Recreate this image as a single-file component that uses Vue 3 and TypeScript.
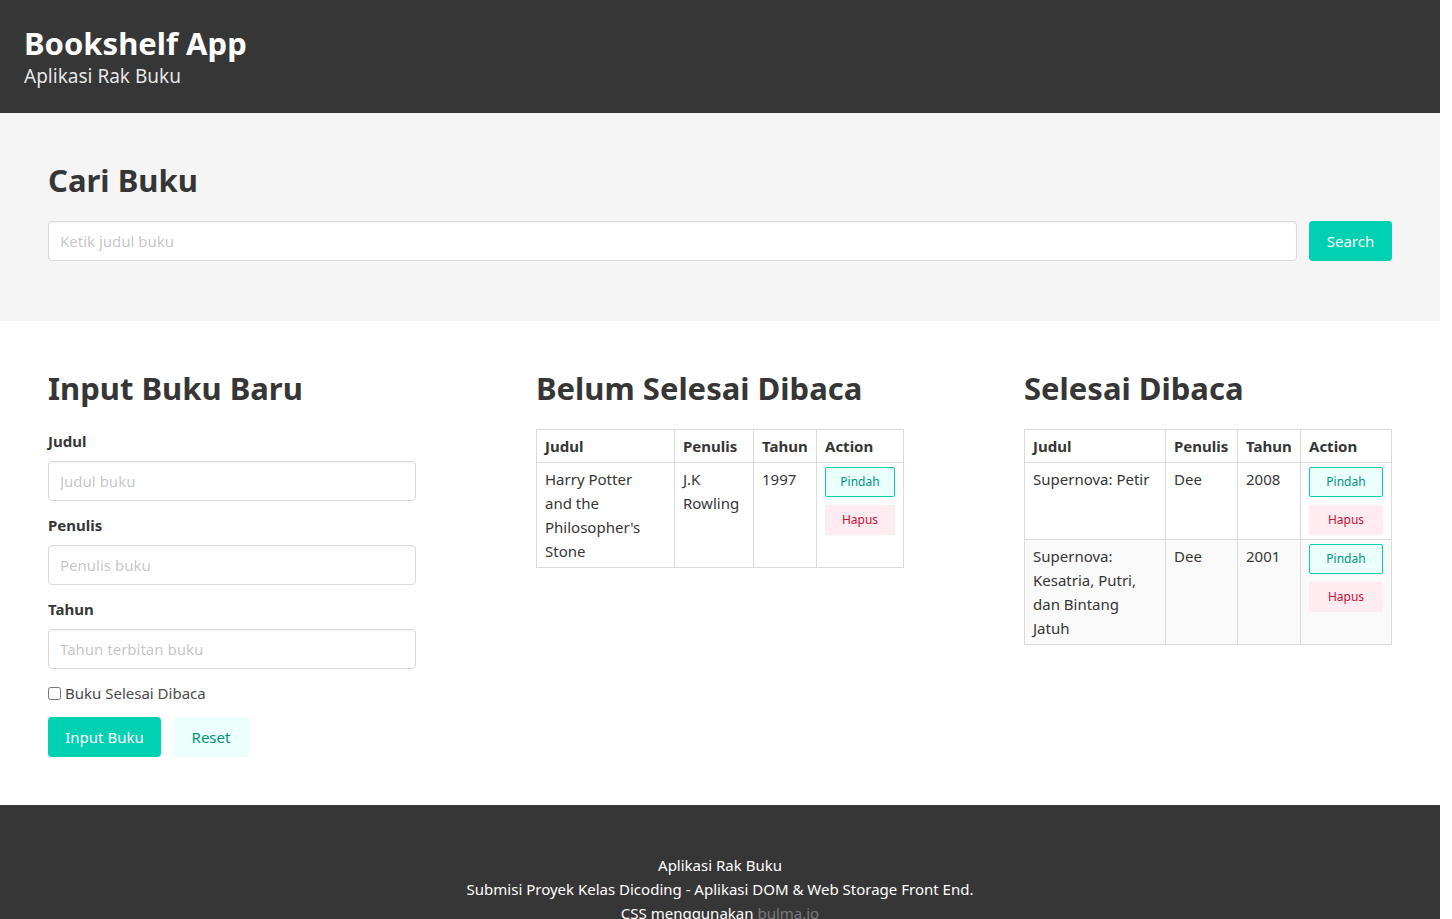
<script setup lang="ts">
import { reactive, ref } from 'vue'

interface Book {
  id: number
  title: string
  author: string
  year: number
}

interface Shelf {
  key: string
  heading: string
  books: Book[]
}

const keyword = ref('')
const form = reactive({ title: '', author: '', year: '', isComplete: false })

const shelves = reactive<Shelf[]>([
  {
    key: 'unread',
    heading: 'Belum Selesai Dibaca',
    books: [{ id: 1, title: "Harry Potter and the Philosopher's Stone", author: 'J.K Rowling', year: 1997 }],
  },
  {
    key: 'read',
    heading: 'Selesai Dibaca',
    books: [
      { id: 2, title: 'Supernova: Petir', author: 'Dee', year: 2008 },
      { id: 3, title: 'Supernova: Kesatria, Putri, dan Bintang Jatuh', author: 'Dee', year: 2001 },
    ],
  },
])

function resetForm(): void {
  Object.assign(form, { title: '', author: '', year: '', isComplete: false })
}

function addBook(): void {
  if (!form.title) return
  shelves[form.isComplete ? 1 : 0].books.push({
    id: Date.now(),
    title: form.title,
    author: form.author,
    year: Number(form.year),
  })
  resetForm()
}

function removeBook(shelf: number, id: number): Book {
  const books = shelves[shelf].books
  return books.splice(books.findIndex((b) => b.id === id), 1)[0]
}

function moveBook(shelf: number, id: number): void {
  shelves[1 - shelf].books.push(removeBook(shelf, id))
}
</script>

<template>
  <div class="page">
    <header class="hero">
      <h1 class="title hero-title">Bookshelf App</h1>
      <p class="subtitle">Aplikasi Rak Buku</p>
    </header>

    <section class="search">
      <h2 class="title">Cari Buku</h2>
      <form class="search-row" @submit.prevent>
        <input v-model="keyword" class="input" type="text" placeholder="Ketik judul buku" aria-label="Cari Buku" />
        <button class="button primary search-button" type="submit">Search</button>
      </form>
    </section>

    <main class="columns">
      <section>
        <h2 class="title">Input Buku Baru</h2>
        <form class="book-form" @submit.prevent="addBook">
          <div class="field">
            <label class="label" for="book-title">Judul</label>
            <input id="book-title" v-model="form.title" class="input" type="text" placeholder="Judul buku" />
          </div>
          <div class="field">
            <label class="label" for="book-author">Penulis</label>
            <input id="book-author" v-model="form.author" class="input" type="text" placeholder="Penulis buku" />
          </div>
          <div class="field">
            <label class="label" for="book-year">Tahun</label>
            <input id="book-year" v-model="form.year" class="input" type="text" placeholder="Tahun terbitan buku" />
          </div>
          <label class="checkbox">
            <input v-model="form.isComplete" type="checkbox" />
            <span>Buku Selesai Dibaca</span>
          </label>
          <div class="buttons">
            <button class="button primary submit-button" type="submit">Input Buku</button>
            <button class="button primary-light reset-button" type="button" @click="resetForm">Reset</button>
          </div>
        </form>
      </section>

      <section v-for="(shelf, index) in shelves" :key="shelf.key">
        <h2 class="title">{{ shelf.heading }}</h2>
        <table class="table" :class="shelf.key">
          <thead>
            <tr>
              <th>Judul</th>
              <th class="author">Penulis</th>
              <th class="year">Tahun</th>
              <th class="action">Action</th>
            </tr>
          </thead>
          <tbody>
            <tr v-for="book in shelf.books" :key="book.id">
              <td class="book-name">{{ book.title }}</td>
              <td>{{ book.author }}</td>
              <td>{{ book.year }}</td>
              <td>
                <div class="actions">
                  <button class="button small move" type="button" @click="moveBook(index, book.id)">Pindah</button>
                  <button class="button small remove" type="button" @click="removeBook(index, book.id)">Hapus</button>
                </div>
              </td>
            </tr>
          </tbody>
        </table>
      </section>
    </main>

    <footer class="footer">
      <p>Aplikasi Rak Buku</p>
      <p>Submisi Proyek Kelas Dicoding - Aplikasi DOM &amp; Web Storage Front End.</p>
      <p>CSS menggunakan <a href="#bulma">bulma.io</a></p>
    </footer>
  </div>
</template>

<style>
body {
  margin: 0;
  background: #fff;
}
</style>

<style scoped>
.page {
  padding-right: 12px;
  color: #4a4a4a;
  font-family: "Noto Sans", "Open Sans", sans-serif;
  font-size: 15px;
  line-height: 24px;
}

.page *,
.page {
  box-sizing: border-box;
}

p {
  margin: 0;
}

.title {
  margin: 0 0 22px;
  color: #363636;
  font-size: 31px;
  font-weight: 700;
  line-height: 38px;
}

.hero {
  padding: 24px;
  background: #363636;
}

.hero-title {
  margin-bottom: 2px;
  color: #fff;
}

.subtitle {
  color: rgba(255, 255, 255, 0.9);
  font-size: 19px;
  line-height: 25px;
}

.search {
  padding: 48px 48px 60px;
  background: #f5f5f5;
}

.search-row,
.buttons {
  display: flex;
  gap: 12px;
}

.input {
  width: 100%;
  height: 40px;
  padding: 0 11px;
  border: 1px solid #dbdbdb;
  border-radius: 4px;
  background: #fff;
  box-shadow: inset 0 1px 2px rgba(10, 10, 10, 0.05);
  color: #363636;
  font: inherit;
}

.input::placeholder {
  color: rgba(54, 54, 54, 0.3);
  opacity: 1;
}

.button {
  flex-shrink: 0;
  height: 40px;
  padding: 0 16px;
  border: 1px solid transparent;
  border-radius: 4px;
  font: inherit;
  text-align: center;
  white-space: nowrap;
  cursor: pointer;
}

.primary {
  background: #00d1b2;
  color: #fff;
}

.primary-light {
  background: #ebfffc;
  color: #00947e;
}

.search-button {
  min-width: 83px;
}

.submit-button {
  min-width: 113px;
}

.reset-button {
  min-width: 76px;
}

.columns {
  display: grid;
  grid-template-columns: repeat(3, minmax(0, 1fr));
  gap: 120px;
  padding: 48px;
}

.book-form {
  display: flex;
  flex-direction: column;
  gap: 12px;
}

.field {
  display: flex;
  flex-direction: column;
  gap: 8px;
}

.label {
  color: #363636;
  font-weight: 700;
}

.checkbox {
  display: flex;
  align-items: center;
  align-self: flex-start;
  gap: 4px;
  cursor: pointer;
}

.checkbox input {
  width: 13px;
  height: 13px;
  margin: 0;
}

.table {
  width: 100%;
  border-collapse: collapse;
  table-layout: fixed;
  background: #fff;
  color: #363636;
}

.table th,
.table td {
  padding: 4px 8px;
  border: 1px solid #dbdbdb;
  text-align: left;
  vertical-align: top;
}

.table th {
  font-weight: 700;
}

.table.unread .book-name {
  padding-right: 16px;
}

.table tbody tr:nth-child(even) {
  background: #fafafa;
}

.author {
  width: 79px;
}

.read .author {
  width: 72px;
}

.year {
  width: 63px;
}

.action {
  width: 87px;
}

.read .action {
  width: 91px;
}

.actions {
  display: flex;
  flex-direction: column;
  gap: 8px;
}

.small {
  height: 30px;
  padding: 0 12px;
  border-radius: 2px;
  font-size: 12px;
}

.move {
  border-color: #00d1b2;
  background: #ebfffc;
  color: #00947e;
}

.remove {
  background: #feecf0;
  color: #cc0f35;
}

.footer {
  padding: 48px 24px 96px;
  background: #363636;
  color: #fff;
  text-align: center;
}

.footer a {
  color: #7a7a7a;
  text-decoration: none;
}
</style>
